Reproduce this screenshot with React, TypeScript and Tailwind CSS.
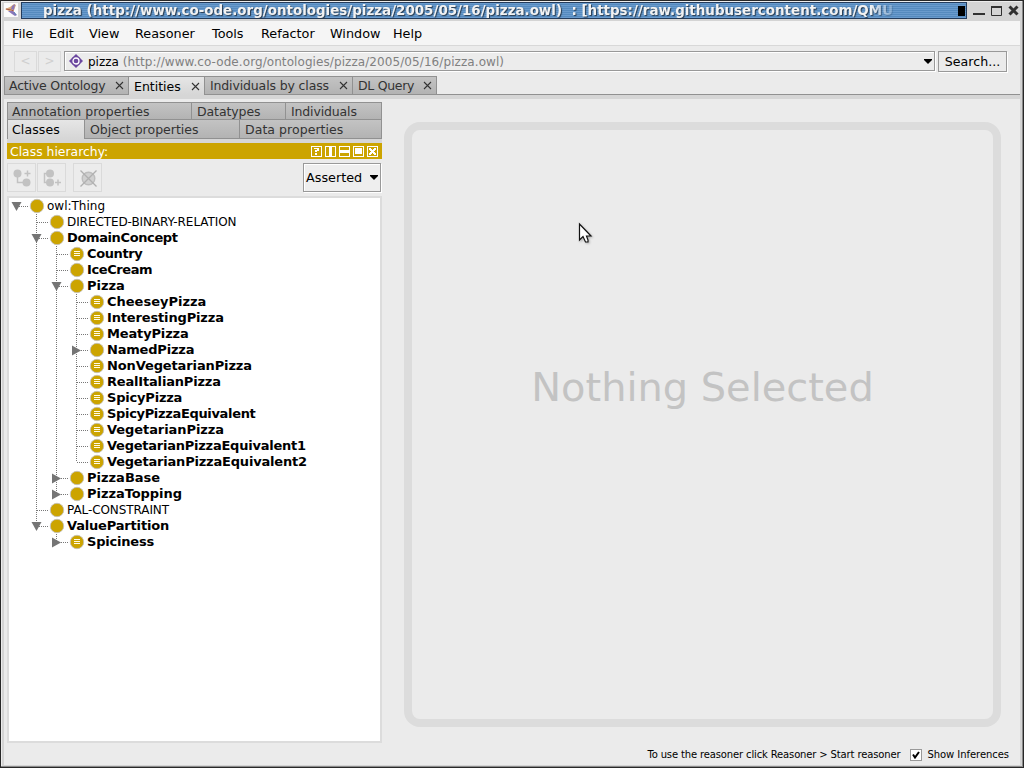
import React from "react";

type Node = { d: number; name: string; eq?: boolean; plain?: boolean; open?: boolean; closed?: boolean; v: string; t?: string };

// v: one character per guide column. "|" through, "+" branch, "L" last branch, "-" root, " " empty
const rows: Node[] = [
  { d: 0, name: "owl:Thing", plain: true, open: true, v: "-" },
  { d: 1, name: "DIRECTED-BINARY-RELATION", plain: true, v: " +", t: "tracking-[-0.08px]" },
  { d: 1, name: "DomainConcept", open: true, v: " +", t: "tracking-[-0.38px]" },
  { d: 2, name: "Country", eq: true, v: " |+", t: "tracking-[-0.4px]" },
  { d: 2, name: "IceCream", v: " |+", t: "tracking-[-0.4px]" },
  { d: 2, name: "Pizza", open: true, v: " |+" },
  { d: 3, name: "CheeseyPizza", eq: true, v: " ||+" },
  { d: 3, name: "InterestingPizza", eq: true, v: " ||+", t: "tracking-[-0.15px]" },
  { d: 3, name: "MeatyPizza", eq: true, v: " ||+", t: "tracking-[-0.15px]" },
  { d: 3, name: "NamedPizza", closed: true, v: " ||+", t: "tracking-[-0.2px]" },
  { d: 3, name: "NonVegetarianPizza", eq: true, v: " ||+", t: "tracking-[-0.12px]" },
  { d: 3, name: "RealItalianPizza", eq: true, v: " ||+", t: "tracking-[-0.18px]" },
  { d: 3, name: "SpicyPizza", eq: true, v: " ||+", t: "tracking-[-0.2px]" },
  { d: 3, name: "SpicyPizzaEquivalent", eq: true, v: " ||+", t: "tracking-[-0.33px]" },
  { d: 3, name: "VegetarianPizza", eq: true, v: " ||+", t: "tracking-[-0.07px]" },
  { d: 3, name: "VegetarianPizzaEquivalent1", eq: true, v: " ||+", t: "tracking-[-0.24px]" },
  { d: 3, name: "VegetarianPizzaEquivalent2", eq: true, v: " ||L", t: "tracking-[-0.2px]" },
  { d: 2, name: "PizzaBase", closed: true, v: " |+" },
  { d: 2, name: "PizzaTopping", closed: true, v: " |L", t: "tracking-[-0.05px]" },
  { d: 1, name: "PAL-CONSTRAINT", plain: true, v: " +", t: "tracking-[-0.08px]" },
  { d: 1, name: "ValuePartition", open: true, v: " L", t: "tracking-[-0.18px]" },
  { d: 2, name: "Spiciness", eq: true, closed: true, v: "  L", t: "tracking-[-0.2px]" },
];

function Guide({ kind, open, closed }: { kind: string; open?: boolean; closed?: boolean }) {
  const dash = { stroke: "#777", strokeDasharray: "1 1", shapeRendering: "crispEdges" as const };
  return (
    <svg width="20" height="16" className="block shrink-0 overflow-visible">
      {(kind === "|" || kind === "+") && <line x1="7.5" x2="7.5" y1="0" y2="16" {...dash} />}
      {kind === "L" && <line x1="7.5" x2="7.5" y1="0" y2="8" {...dash} />}
      {kind !== "|" && kind !== " " && <line x1="8" x2="19" y1="8.5" y2="8.5" {...dash} />}
      {open && <path d="M2.5 4h10L7.5 13z" fill="#757575" />}
      {closed && <path d="M3 3.5v10L12 8.5z" fill="#757575" />}
    </svg>
  );
}

function ClassIcon({ eq }: { eq?: boolean }) {
  return (
    <svg width="16" height="16" className="block shrink-0">
      <circle cx="8" cy="8" r="6.7" fill="#cca400" stroke="#c4c0b4" strokeWidth="0.9" />
      {eq && <path d="M5 5.5h6M5 7.5h6M5 9.5h6" stroke="#fffbe8" shapeRendering="crispEdges" />}
    </svg>
  );
}

function Tab({ label, active, className = "", close }: { label: string; active?: boolean; className?: string; close?: boolean }) {
  return (
    <div className={`flex items-center justify-between border-t border-r border-[#919191] pr-[4px] whitespace-nowrap ${active ? "bg-linear-to-b from-[#e6e6e6] to-[#d6d6d6] text-black" : "border-b bg-linear-to-b from-[#c3c3c3] to-[#b3b3b3] text-[#333]"} ${className}`}>
      <span>{label}</span>
      {close && (
        <svg width="9" height="9"><path d="M1 1l7 7M8 1L1 8" stroke="#333" strokeWidth="1.1" /></svg>
      )}
    </div>
  );
}

const menus: [string, string][] = [
  ["File", "w-[37px]"], ["Edit", "w-[40px]"], ["View", "w-[46px]"], ["Reasoner", "w-[77px]"],
  ["Tools", "w-[49px]"], ["Refactor", "w-[69px]"], ["Window", "w-[63px]"], ["Help", "w-[40px]"],
];

function TitleBar() {
  return (
    <div className="flex h-[19px] shrink-0 bg-[#d4d4d4]">
      <svg width="17" height="17" className="shrink-0">
        <rect x="0" y="1" width="14" height="14" fill="#fbfbfb" />
        <path d="M1 7l5-2 4-3 2 1-2 5-5 1z" fill="#d9a878" />
        <path d="M8 4l3-2-1 6-3-1zM4 9l5 0 4 4-2 1-3-2z" fill="#8a76b8" />
        <path d="M2 7l5 1 3 1" stroke="#a85a45" fill="none" />
        <path d="M10 10l2 3" stroke="#5d83b8" />
      </svg>
      <div className="flex h-[17px] w-[946px] items-center justify-between border border-[#243c5c] bg-[repeating-linear-gradient(to_bottom,#6a9bcd_0px,#6a9bcd_1px,#558abe_1px,#558abe_2px)]">
        <span className="w-[890px] pl-[21px] text-[13.45px] leading-[17px] font-bold whitespace-pre text-[#f2f2f2] [mask-image:linear-gradient(to_right,#000_848px,transparent_876px)] [text-shadow:1px_1px_1px_#27394d]">pizza (http://www.co-ode.org/ontologies/pizza/2005/05/16/pizza.owl)  : [https://raw.githubusercontent.com/QMU</span>
        <span className="mr-px h-[10px] w-[7px] bg-black" />
      </div>
      <svg width="54" height="17" className="shrink-0" fill="none" stroke="#303030">
        <path d="M6 12h12" strokeWidth="2" />
        <path d="M24.5 4.5h10v9h-10z" /><path d="M24 5h11" strokeWidth="2" />
        <path d="M42.5 4.5l8 8M50.5 4.5l-8 8" strokeWidth="3" />
      </svg>
    </div>
  );
}

function ToolButton({ children, className = "" }: { children: React.ReactNode; className?: string }) {
  return <div className={`flex h-[29px] w-[29px] items-center justify-center border border-[#dadada] bg-[#ececec] ${className}`}>{children}</div>;
}

function Hierarchy() {
  return (
    <div className="flex w-[375px] flex-col">
      <div className="flex h-[18px] border-l border-[#919191] text-[12.5px] leading-[17px]">
        <Tab label="Annotation properties" className="w-[184px] pl-[4px] tracking-[0.06px]" />
        <Tab label="Datatypes" className="w-[94px] pl-[5px] tracking-[-0.1px]" />
        <Tab label="Individuals" className="w-[96px] pl-[5px] tracking-[-0.15px]" />
      </div>
      <div className="flex h-[19px] border-l border-[#919191] text-[12.5px] leading-[17px]">
        <Tab label="Classes" active className="w-[77px] border-t-0 pl-[4px] tracking-[0.1px]" />
        <Tab label="Object properties" className="w-[155px] border-t-0 pl-[5px]" />
        <Tab label="Data properties" className="w-[142px] border-t-0 pl-[5px] tracking-[0.05px]" />
      </div>
      <div className="h-[4px] bg-[#d6d6d6]" />
      <div className="flex h-[16px] items-center justify-between bg-[#cca400] pr-[4px] pl-[3px] text-[12.4px] leading-[16px] text-white">
        <span className="pt-px">Class hierarchy:</span>
        <svg width="67" height="11" fill="none" stroke="#fff" shapeRendering="crispEdges">
          <path d="M.5 .5h10v10h-10zM14.5 .5h10v10h-10zM28.5 .5h10v10h-10zM42.5 .5h10v10h-10zM56.5 .5h10v10h-10z" />
          <path d="M3 2h5v3h-2v1h-2v-2h2v-1h-3zM4 7h2v2h-2z" fill="#fff" stroke="none" />
          <path d="M18 1h3v9h-3zM29 4h9v3h-9zM44 2h7v6h-7z" fill="#fff" stroke="none" />
          <path d="M58 2h2v1h1v1h1v-1h1v-1h2v2h-1v1h-1v1h1v1h1v2h-2v-1h-1v-1h-1v1h-1v1h-2v-2h1v-1h1v-1h-1v-1h-1z" fill="#fff" stroke="none" />
        </svg>
      </div>
      <div className="flex h-[37px] items-center">
        <ToolButton>
          <svg width="20" height="20" fill="#c2c2c2"><circle cx="5.5" cy="5.5" r="4" /><circle cx="14.5" cy="14.5" r="4" /><path d="M5.5 6v8.5H14M12.5 5.5h6M15.5 2.5v6" fill="none" stroke="#c2c2c2" strokeWidth="1.5" /></svg>
        </ToolButton>
        <ToolButton className="ml-px">
          <svg width="20" height="20" fill="#c2c2c2"><circle cx="8" cy="5.5" r="4" /><circle cx="8" cy="14.5" r="4" /><path d="M8 5.5H2.5v9H8M13 14.5h6M16 11.5v6" fill="none" stroke="#c2c2c2" strokeWidth="1.5" /></svg>
        </ToolButton>
        <ToolButton className="ml-[7px]">
          <svg width="20" height="20" fill="none"><circle cx="10.5" cy="10.5" r="6.3" fill="#d0d0d0" stroke="#bdbdbd" strokeWidth="1.4" /><path d="M2.5 2.5l16 16M18.5 2.5l-16 16" stroke="#b0b0b0" strokeWidth="1.3" /></svg>
        </ToolButton>
        <div className="mr-px ml-auto flex h-[29px] w-[78px] items-center justify-between border border-[#999] bg-[#eeeeee] pr-[2px] pl-[2px] text-[12.8px] shadow-[inset_1px_1px_0_#fff,1px_1px_0_#fff]">
          <span>Asserted</span>
          <svg width="8" height="5"><path d="M0 0h8v1L4 5L0 1z" /></svg>
        </div>
      </div>
      <div className="flex h-[547px] flex-col border-2 border-[#dcdcdc] bg-white">
        {rows.map((r) => (
          <div key={r.name} className="flex h-[16px] items-center">
            {r.v.split("").map((k, i) => (
              <Guide key={i} kind={k} open={i === r.d && r.open} closed={i === r.d && r.closed} />
            ))}
            <ClassIcon eq={r.eq} />
            <span className={`ml-[2px] leading-[16px] whitespace-nowrap ${r.plain ? "text-[12px]" : "text-[13px] font-bold"} ${r.t ?? ""}`}>{r.name}</span>
          </div>
        ))}
      </div>
    </div>
  );
}

export default function App() {
  return (
    <div className="flex h-[768px] w-[1024px] flex-col overflow-hidden border border-[#282828] bg-[#d4d4d4] pt-px pr-[2px] pl-[3px] font-['DejaVu_Sans',sans-serif] text-black shadow-[inset_-1px_-1px_0_#8a8a8a,inset_1px_1px_0_#ececec]">
      <TitleBar />
      <div className="mr-px flex h-[25px] shrink-0 items-center border-b border-[#d8d8d8] bg-[#f5f5f5] pt-[2px] pl-[8px] text-[12.8px]">
        {menus.map(([m, w]) => <span key={m} className={w}>{m}</span>)}
      </div>
      <div className="mr-px flex h-[30px] shrink-0 items-center bg-[#ebebeb] pl-[10px] text-[12px]">
        <div className="flex h-[21px] w-[23px] items-center justify-center border border-[#dadada] text-[#d0d0d0]">&lt;</div>
        <div className="ml-px flex h-[21px] w-[23px] items-center justify-center border border-[#dadada] text-[#d0d0d0]">&gt;</div>
        <div className="ml-[3px] flex h-[20px] w-[871px] items-center border border-[#999] bg-[#ececec] pr-[2px] pl-[4px] whitespace-pre shadow-[inset_1px_1px_0_#fff,1px_1px_0_#fff]">
          <svg width="14" height="14"><path d="M7 0l7 7-7 7-7-7z" fill="#6b479f" /><circle cx="7" cy="7" r="4.8" fill="#6b479f" /><circle cx="7" cy="7" r="3" fill="none" stroke="#fff" strokeWidth="1.3" /></svg>
          <span className="ml-[5px] pt-px">pizza </span><span className="pt-px tracking-[0.08px] text-[#808080]">(http://www.co-ode.org/ontologies/pizza/2005/05/16/pizza.owl)</span>
          <svg width="8" height="5" className="ml-auto"><path d="M0 0h8v1L4 5L0 1z" /></svg>
        </div>
        <div className="ml-[3px] flex h-[21px] w-[69px] items-center justify-center border border-[#999] pt-[2px] text-[12.6px] shadow-[1px_1px_0_#fff]">Search...</div>
      </div>
      <div className="mr-px flex h-[19px] shrink-0 border-l border-[#919191] bg-[linear-gradient(to_bottom,#ebebeb_18px,#919191_18px)] text-[12.5px] leading-[17px]">
        <Tab label="Active Ontology" close className="w-[124px] pl-[4px] tracking-[-0.2px]" />
        <Tab label="Entities" close active className="w-[76px] pl-[5px]" />
        <Tab label="Individuals by class" close className="w-[148px] pl-[5px] tracking-[-0.14px]" />
        <Tab label="DL Query" close className="w-[84px] pl-[5px] tracking-[-0.3px]" />
      </div>
      <div className="mr-px h-[4px] shrink-0 bg-[#d6d6d6]" />
      <div className="mr-px flex h-[645px] shrink-0 bg-[#ebebeb] pt-[3px] pl-[3px]">
        <Hierarchy />
        <div className="mt-[20px] ml-[22px] flex h-[605px] w-[597px] items-center justify-center rounded-[16px] border-8 border-[#dcdcdc] pb-[74px] text-[39.9px] text-[#c3c3c3]">
          Nothing Selected
        </div>
      </div>
      <div className="mr-px flex h-[21px] shrink-0 items-center justify-end bg-[#ebebeb] pr-[11px] text-[10px]">
        <span className="tracking-[-0.14px]">To use the reasoner click Reasoner &gt; Start reasoner</span>
        <span className="mr-[5px] ml-[10px] flex h-[12px] w-[12px] items-center justify-center border border-[#999] bg-white">
          <svg width="8" height="8"><path d="M1 3.5l2 3L7 1" fill="none" stroke="#000" strokeWidth="2" /></svg>
        </span>
        <span className="tracking-[-0.05px]">Show Inferences</span>
      </div>
      <svg width="16" height="24" className="absolute top-[222px] left-[578px] drop-shadow-[1px_1px_1px_#0004]">
        <path d="M1.5 2v16l3.5-3.5 2.5 5.500h2.500v-2l-1.500-4h4.500z" fill="#fff" stroke="#111" strokeWidth="1.2" />
      </svg>
    </div>
  );
}
